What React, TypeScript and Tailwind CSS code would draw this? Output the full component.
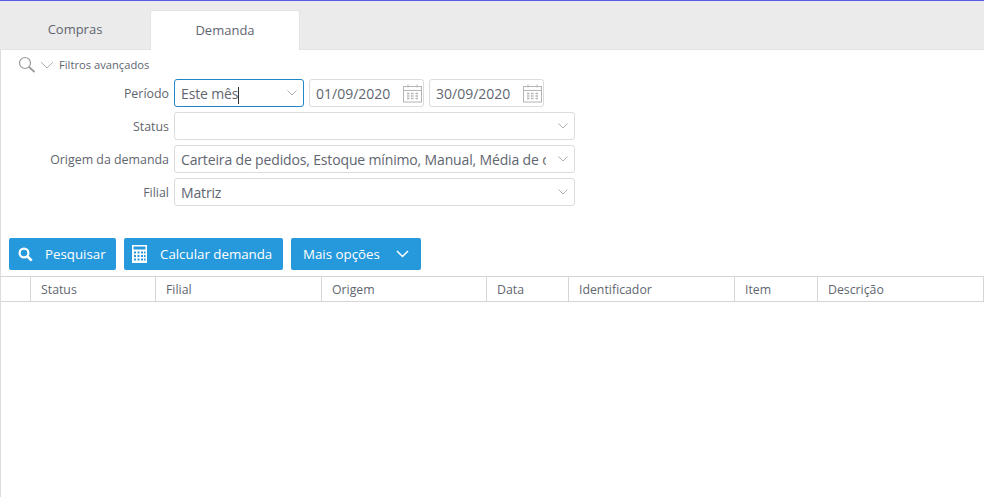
import React from "react";

const font = { fontFamily: '"Open Sans", "Noto Sans", sans-serif' };

function Chevron({ className = "" }: { className?: string }) {
  return (
    <svg width="10" height="6" viewBox="0 0 10 6" className={className} fill="none" stroke="#b0b0b0" strokeWidth="1">
      <path d="M0.500 0.500l4.500 4.500 4.500-4.500" />
    </svg>
  );
}

function Calendar() {
  return (
    <svg width="19" height="19" viewBox="0 0 19 19" fill="none" stroke="#b4b4b4" strokeWidth="1">
      <rect x="0.500" y="2.500" width="18" height="15.500" />
      <path d="M0.500 6.500h18" />
      <path d="M5 0.500v3M14 0.500v3" />
      <path d="M4 9.500h2.500M8 9.500h2.500M12.500 9.500h2.500M4 12h2.500M8 12h2.500M12.500 12h2.500M4 14.500h2.500M8 14.500h2.500M12.500 14.500h2.500" strokeWidth="1.500" />
    </svg>
  );
}

function Select({ text, width, focus = false, cursor = false }: { text: string; width: string; focus?: boolean; cursor?: boolean }) {
  return (
    <div className={`${width} flex h-[28px] items-center justify-between rounded-[3px] border bg-white pl-[6px] pr-[6px] ${focus ? "border-[#1f86c7]" : "border-[#dcdcdc]"}`}>
      <span className="flex-1 overflow-hidden whitespace-nowrap text-[14px] tracking-[-0.15px] text-[#5f6670]">
        {text}
        {cursor && <span className="-my-[4px] inline-block h-[20px] w-px translate-y-[4px] bg-[#333]" />}
      </span>
      <Chevron className="ml-[12px] shrink-0" />
    </div>
  );
}

function DateField({ value }: { value: string }) {
  return (
    <div className="flex h-[28px] w-[115px] items-center justify-between rounded-[3px] border border-[#dcdcdc] bg-white pl-[6px] pr-[1px]">
      <span className="whitespace-nowrap text-[14px] text-[#5f6670]">{value}</span>
      <Calendar />
    </div>
  );
}

function Row({ label, children }: { label: string; children: React.ReactNode }) {
  return (
    <div className="flex items-center">
      <label className="w-[168px] whitespace-nowrap pt-[2px] text-right text-[12.4px] text-[#5f6670]">{label}</label>
      <div className="ml-[5px] flex gap-[5px]">{children}</div>
    </div>
  );
}

function Btn({ icon, label, width, pl, gap, pr }: { icon?: React.ReactNode; label: string; width: string; pl: string; gap?: string; pr?: React.ReactNode }) {
  return (
    <button className={`${width} ${pl} flex h-[32px] items-center rounded-[2px] bg-[#2699dc] text-[13.3px] text-white`}>
      {icon}
      <span className={`${gap ?? ""} whitespace-nowrap pt-[1px]`}>{label}</span>
      {pr}
    </button>
  );
}

const cols = [
  { w: "w-[125px]", t: "Status" },
  { w: "w-[166px]", t: "Filial" },
  { w: "w-[165px]", t: "Origem" },
  { w: "w-[82px]", t: "Data" },
  { w: "w-[166px]", t: "Identificador" },
  { w: "w-[83px]", t: "Item" },
  { w: "flex-1", t: "Descrição" },
];

export default function App() {
  return (
    <div style={font} className="h-[497px] w-[984px] overflow-hidden bg-white">
      <div className="h-px bg-[#5b5be6]" />
      <div className="flex h-[49px] items-end border-b border-[#e3e3e3] bg-[#ebebeb]">
        <div className="flex h-[39px] w-[150px] items-center justify-center text-[13px] text-[#5f6670]">Compras</div>
        <div className="-mb-px flex h-[40px] w-[150px] items-center justify-center rounded-t-[3px] border border-b-0 border-[#e3e3e3] bg-white text-[13px] text-[#5f6670]">Demanda</div>
      </div>
      <div className="h-[447px] border-l border-[#dcdcdc]">
        <div className="flex h-[29px] items-center pl-[17px]">
          <svg width="18" height="18" viewBox="0 0 18 18" fill="none" stroke="#9a9a9a">
            <circle cx="7" cy="7" r="5.500" strokeWidth="1.200" />
            <path d="M11 11l5.500 5" strokeWidth="1.800" />
          </svg>
          <svg width="14" height="8" viewBox="0 0 14 8" fill="none" stroke="#b0b0b0" className="ml-[4px]">
            <path d="M1 1l6 6 6-6" />
          </svg>
          <span className="ml-[5px] whitespace-nowrap pt-[2px] text-[11.2px] text-[#5f6670]">Filtros avançados</span>
        </div>
        <div className="flex flex-col gap-[5px]">
          <Row label="Período">
            <Select text="Este mês" width="w-[130px]" focus cursor />
            <DateField value="01/09/2020" />
            <DateField value="30/09/2020" />
          </Row>
          <Row label="Status">
            <Select text="" width="w-[401px]" />
          </Row>
          <Row label="Origem da demanda">
            <Select text="Carteira de pedidos, Estoque mínimo, Manual, Média de consumo" width="w-[401px]" />
          </Row>
          <Row label="Filial">
            <Select text="Matriz" width="w-[401px]" />
          </Row>
        </div>
        <div className="mt-[32px] flex gap-[8px] pl-[8px]">
          <Btn
            width="w-[107px]"
            pl="pl-[9px]"
            gap="ml-[12px]"
            label="Pesquisar"
            icon={
              <svg width="15" height="15" viewBox="0 0 15 15" fill="none" stroke="#fff">
                <circle cx="6" cy="6" r="4.400" strokeWidth="2.200" />
                <path d="M9.500 9.500l4.200 4.200" strokeWidth="2.600" />
              </svg>
            }
          />
          <Btn
            width="w-[159px]"
            pl="pl-[8px]"
            gap="ml-[13px]"
            label="Calcular demanda"
            icon={
              <svg width="15" height="18" viewBox="0 0 15 18" fill="#fff">
                <path fillRule="evenodd" d="M0 0h15v18H0zM1.500 1.500v3h12v-3zM2 6.500v2h2v-2zM5.500 6.500v2h2v-2zM9 6.500v2h2v-2zM12 6.500v2h1.500v-2zM2 10v2h2v-2zM5.500 10v2h2v-2zM9 10v2h2v-2zM12 10v2h1.500v-2zM2 13.500v2h2v-2zM5.500 13.500v2h2v-2zM9 13.500v2h2v-2zM12 13.500v2h1.500v-2z" />
              </svg>
            }
          />
          <Btn
            width="w-[130px]"
            pl="pl-[12px]"
            label="Mais opções"
            pr={
              <svg width="13" height="8" viewBox="0 0 13 8" fill="none" stroke="#fff" strokeWidth="1.500" className="ml-[16px]">
                <path d="M1 1l5.500 5.500L12 1" />
              </svg>
            }
          />
        </div>
        <div className="mt-[6px] flex h-[26px] border-y border-r border-[#d5d5d5]">
          <div className="w-[30px] shrink-0 border-r border-[#d5d5d5]" />
          {cols.map((c, i) => (
            <div key={c.t} className={`${c.w} ${i < cols.length - 1 ? "border-r border-[#d5d5d5]" : ""} flex items-center pl-[10px] pt-[2px] text-[12.3px] text-[#5f6670]`}>
              {c.t}
            </div>
          ))}
        </div>
      </div>
    </div>
  );
}
